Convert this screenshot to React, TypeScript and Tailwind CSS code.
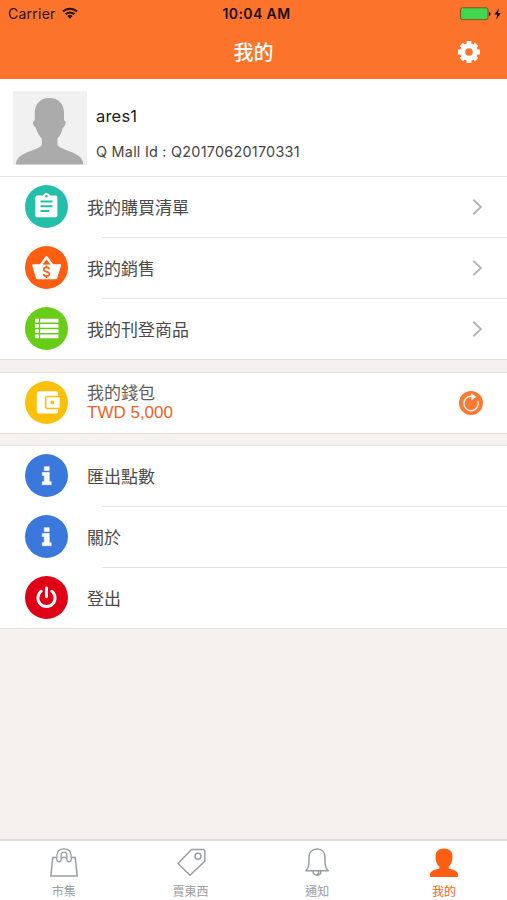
import type { ReactNode } from 'react';

const cjk = "font-['Inter','Noto_Sans_CJK_TC',sans-serif]";

function Disc({ color, children }: { color: string; children: ReactNode }) {
  return (
    <svg className="mb-[2px] ml-[25px] h-[43px] w-[43px] shrink-0" viewBox="0 0 43 43" fill="none">
      <circle cx="21.5" cy="21.5" r="21.5" fill={color} />
      {children}
    </svg>
  );
}

function ClipboardIcon() {
  return (
    <Disc color="#23bfab">
      <path d="M12.2 10.600H18a3.7 3.7 0 0 1 7 0h5.500a1.900 1.900 0 0 1 1.900 1.900v17.900a1.900 1.900 0 0 1-1.900 1.900H12.200a1.900 1.900 0 0 1-1.900-1.900V12.500A1.900 1.900 0 0 1 12.200 10.600Z" fill="#fff" />
      <circle cx="21.400" cy="11.200" r="1.200" fill="#23bfab" />
      <path d="M15.500 16.500h12M15.500 21.300h12M15.500 26h8.500" stroke="#23bfab" strokeWidth="2" />
    </Disc>
  );
}

function BasketIcon() {
  return (
    <Disc color="#fd5e12">
      <path d="m15.500 19.500 6-8.300 6 8.300" stroke="#fff" strokeWidth="2.400" strokeLinejoin="round" />
      <path d="M8 18.300h27.200c.7 0 1 .5.8 1.100l-3.700 12.500c-.3.900-.9 1.400-1.800 1.400H12.700c-.9 0-1.500-.5-1.800-1.400L7.200 19.400c-.2-.6.100-1.100.8-1.100Z" fill="#fff" />
      <path d="m18 18.500 3.500-4.500 3.500 4.500Z" fill="#fd5e12" />
      <path d="M24.300 23.200c-.4-1.200-1.500-1.800-2.800-1.800-1.600 0-2.700.9-2.700 2.100 0 3.100 5.600 1.600 5.600 4.500 0 1.400-1.200 2.200-2.900 2.200-1.500 0-2.600-.6-3-2M21.500 19.600v2M21.500 30v2" stroke="#fd5e12" strokeWidth="1.700" />
    </Disc>
  );
}

function ListIcon() {
  return (
    <Disc color="#67cd17">
      <path d="M10 13.700h3.800M15.200 13.700h18.300M10 18.900h3.800M15.200 18.900h18.300M10 24.100h3.800M15.200 24.100h18.300M10 29.300h3.800M15.200 29.300h18.300" stroke="#fff" strokeWidth="3.700" />
    </Disc>
  );
}

function WalletIcon() {
  return (
    <Disc color="#fbc10a">
      <path d="M14 10.300h16.800a2.200 2.200 0 0 1 2.200 2.200v2.300H22.600a2.800 2.800 0 0 0-2.800 2.800v7.800a2.800 2.800 0 0 0 2.800 2.800H33v2a2.200 2.200 0 0 1-2.200 2.200H14a2.200 2.200 0 0 1-2.200-2.200V12.500a2.200 2.200 0 0 1 2.200-2.200Z" fill="#fff" />
      <rect x="21.500" y="16.300" width="13.300" height="10.400" rx="1" fill="#fff" />
      <circle cx="27.300" cy="21.500" r="1.900" fill="#fbc10a" />
    </Disc>
  );
}

function InfoIcon() {
  return (
    <Disc color="#3b78dc">
      <path d="M19.300 12.700h4.900v3.900h-4.900ZM17.300 18.500h7v9.200h1.900v3h-8.900v-3h2v-6.200h-2Z" fill="#fff" stroke="#fff" strokeWidth=".6" strokeLinejoin="round" />
    </Disc>
  );
}

function PowerIcon() {
  return (
    <Disc color="#df0116">
      <path d="M16.200 15.200a8.600 8.600 0 1 0 10.600 0M21.500 12v8.700" stroke="#fff" strokeWidth="2.900" strokeLinecap="round" />
    </Disc>
  );
}

function Row({ icon, label, chevron = false, last = false }: { icon: ReactNode; label: string; chevron?: boolean; last?: boolean }) {
  return (
    <div>
      <div className="flex h-[60px] items-center">
        {icon}
        <span className="mt-px ml-[19px] flex-1 text-[17px] leading-6 text-[#4a4a4a]">{label}</span>
        {chevron && (
          <svg className="mr-6 h-[18px] w-[12px]" viewBox="0 0 12 18" fill="none">
            <path d="m2.300 1.800 7.600 7.200-7.600 7.200" stroke="#b5b5b5" strokeWidth="1.900" />
          </svg>
        )}
      </div>
      <div className={last ? 'h-px bg-[#e3e0de]' : 'ml-[102px] h-px bg-[#e4e4e4]'} />
    </div>
  );
}

function Tab({ label, active = false, children }: { label: string; active?: boolean; children: ReactNode }) {
  return (
    <div className={`flex flex-1 flex-col items-center pt-[7px] ${active ? 'text-[#fd5e12]' : 'text-[#9a9da1]'}`}>
      <svg className="ml-px h-[32px] w-[32px]" viewBox="0 0 32 32" fill="none" stroke="currentColor" strokeWidth="1.500">
        {children}
      </svg>
      <span className="mt-[4px] ml-px text-[12px] leading-[16px]">{label}</span>
    </div>
  );
}

export default function App() {
  return (
    <div className={`flex h-[900px] w-[507px] flex-col overflow-hidden bg-[#f5f1ee] ${cjk}`}>
      <header className="h-[79px] shrink-0 bg-[#fc732c]">
        <div className="grid h-[27px] grid-cols-3 items-center text-[#2b1208]">
          <div className="flex items-center pl-2">
            <span className="text-[14px] leading-5 tracking-[0.25px]">Carrier</span>
            <svg className="ml-[6px] h-[13px] w-[16px]" viewBox="0 0 16 13" fill="none" stroke="currentColor" strokeWidth="2">
              <path d="M1 4.500a10 10 0 0 1 14 0M3.600 7.300a6.200 6.200 0 0 1 8.800 0" />
              <path d="m5.300 9.100 2.700 2.700 2.700-2.700a4 4 0 0 0-5.400 0Z" fill="currentColor" stroke="none" />
            </svg>
          </div>
          <span className="pl-1.5 text-center text-[14px] leading-5 font-semibold tracking-[0.4px] text-[#1a0b04]">10:04 AM</span>
          <div className="flex items-center justify-end pr-[5px]">
            <svg className="h-[14px] w-[42px]" viewBox="0 0 42 14">
              <rect x="0.500" y="0.800" width="27.500" height="11.800" rx="2" fill="#43d651" stroke="#735920" />
              <path d="M29 5q1.500 0 1.500 2t-1.500 2Z" fill="#2b1208" />
              <path d="m38.800 1.500-4.400 6h2.800l-.9 4.900 4.500-6.400h-2.700Z" fill="#160a04" />
            </svg>
          </div>
        </div>
        <div className="grid h-[50px] grid-cols-3 items-center">
          <span />
          <h1 className="mt-px text-center text-[20px] leading-7 font-medium text-white">我的</h1>
          <svg className="mr-[26px] mb-px h-[24px] w-[24px] justify-self-end" viewBox="0 0 24 24" fill="none" stroke="#fff">
            <circle cx="12" cy="12" r="6.300" strokeWidth="5" />
            <path d="M12 1v3.500M12 19.500v3.500M1 12h3.500M19.500 12h3.500M4.400 4.400l2.200 2.200M17.400 17.400l2.200 2.200M4.400 19.600l2.200-2.200M17.400 6.600l2.200-2.200" strokeWidth="4.800" />
          </svg>
        </div>
      </header>

      <section className="flex h-[98px] shrink-0 items-start border-b border-[#e3e3e3] bg-white">
        <svg className="mt-[12px] ml-[13px] h-[74px] w-[74px]" viewBox="0 0 74 74">
          <path d="M0 0h74v74H0Z" fill="#f1f1f1" />
          <path d="M36.500 7c9 0 15.300 6 14.500 17v5.500c3 0 1.500 6-1 7-1.500 5-3 8.500-5.500 11v6.500c3 4 13 6 19 9.500 5 3 6.500 5.500 6.800 10H3c.3-4.500 1.800-7 6.800-10 6-3.500 16-5.500 19-9.500V47.500c-2.500-2.500-4.600-6-6.100-11-2.700-1-4-7-1-7V24c-.6-11 5.500-17 14.800-17Z" fill="#ababab" />
        </svg>
        <div className="ml-[9px] flex flex-col">
          <span className="mt-[25px] text-[16.5px] leading-6 tracking-[0.2px] text-[#222]">ares1</span>
          <span className="mt-[14px] text-[14.4px] leading-5 tracking-[0.25px] text-[#454545]">Q Mall Id : Q20170620170331</span>
        </div>
      </section>

      <section className="shrink-0 bg-white">
        <Row icon={<ClipboardIcon />} label="我的購買清單" chevron />
        <Row icon={<BasketIcon />} label="我的銷售" chevron />
        <Row icon={<ListIcon />} label="我的刊登商品" chevron last />
      </section>

      <section className="mt-[12px] flex h-[62px] shrink-0 items-center border-y border-[#e3e0de] bg-white">
        <WalletIcon />
        <div className="ml-[19px] flex flex-1 flex-col">
          <span className="text-[17px] leading-[20px] text-[#606060]">我的錢包</span>
          <span className="font-['Liberation_Sans',sans-serif] text-[17px] leading-[20px] text-[#f35f20]">TWD 5,000</span>
        </div>
        <svg className="mr-[24px] h-[24px] w-[24px]" viewBox="0 0 24 24" fill="none">
          <circle cx="12" cy="12" r="12" fill="#fb7934" />
          <path d="M18.800 10A7.200 7.200 0 1 1 12.500 5.300" stroke="#fff3e8" strokeWidth="1.500" />
          <path d="m12 2.300 5.200 3.500-4.700 3.800Z" fill="#fff" />
        </svg>
      </section>

      <section className="mt-[11px] shrink-0 border-t border-[#e3e0de] bg-white">
        <Row icon={<InfoIcon />} label="匯出點數" />
        <Row icon={<InfoIcon />} label="關於" />
        <Row icon={<PowerIcon />} label="登出" last />
      </section>

      <nav className="mt-auto flex h-[61px] shrink-0 border-t-2 border-[#e0dddb] bg-white">
        <Tab label="市集">
          <path d="M8.800 9.600H4.800L2.800 28h26.400l-2-18.400h-4M13.500 9.600h5" />
          <path d="M8.900 9.300V7.500C8.900 3.200 11.700.800 16 .800s7.100 2.400 7.100 6.700v4.300a2.100 2.100 0 0 1-4.200 0V7.200c0-1.900-1-3-2.900-3s-2.900 1.100-2.900 3v4.600a2.100 2.100 0 0 1-4.200 0Z" strokeWidth="1.300" />
        </Tab>
        <Tab label="賣東西">
          <path d="M16.500 1.500h12l1.300 1.300v10.500L15 27.300 3 15.500Z" strokeLinejoin="round" />
          <circle cx="23" cy="8.300" r="3" />
        </Tab>
        <Tab label="通知">
          <path d="M4.800 22.700c3-3 3.200-5 3.200-8.700V9.500C8 4.500 11 1 16 1s8 3.500 8 8.500V14c0 3.700.2 5.700 3.200 8.700Z" strokeLinejoin="round" />
          <path d="M12 23c0 5.500 8 5.500 8 0M15 27c2 0 2.600-1.500 2.600-4" />
        </Tab>
        <Tab label="我的" active>
          <path d="M16 .5c5.500 0 8.500 3.200 8.500 8 0 5-1.500 8-3.800 10.300v1.700c6 1.200 9.500 3 9.500 6.500 0 1.600-.6 2-1.700 2h-25c-1.100 0-1.700-.4-1.700-2 0-3.500 3.500-5.300 9.500-6.500v-1.700C9 16.500 7.500 13.500 7.500 8.500c0-4.800 3-8 8.500-8Z" fill="currentColor" stroke="none" />
        </Tab>
      </nav>
    </div>
  );
}
